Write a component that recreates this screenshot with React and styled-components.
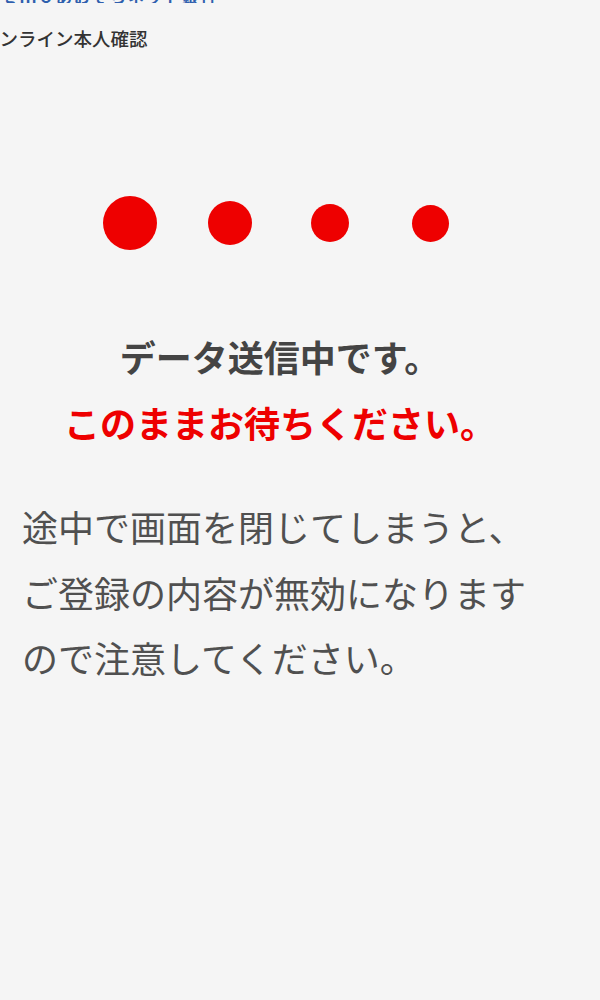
import React from "react";
import styled, { createGlobalStyle } from "styled-components";

const Global = createGlobalStyle`
  html, body { margin: 0; padding: 0; background: #f5f5f5; }
  body { font-family: "Noto Sans CJK JP", "Noto Sans", sans-serif; overflow: hidden; }
  #root { min-height: 1000px; background: #f5f5f5; }
`;

const TopStrip = styled.div`
  height: 3px;
  overflow: hidden;
  display: flex;
  align-items: flex-end;
  padding-left: 2px;
`;

const BrandText = styled.span`
  font-size: 16px;
  line-height: 14px;
  color: #2f5fae;
  font-weight: 700;
  white-space: nowrap;
  letter-spacing: 2px;
`;

const Title = styled.div`
  margin: 23px 0 0 -19px;
  font-size: 18.5px;
  line-height: 24px;
  font-weight: 500;
  color: #333;
  white-space: nowrap;
`;

const Main = styled.main`
  width: 560px;
  display: flex;
  flex-direction: column;
`;

const Dots = styled.div`
  margin-top: 146px;
  height: 54px;
  display: flex;
  justify-content: center;
  align-items: center;
`;

const Slot = styled.div`
  width: 100px;
  display: flex;
  justify-content: center;
  align-items: center;
`;

const Dot = styled.span`
  display: block;
  width: ${(p) => p.$size}px;
  height: ${(p) => p.$size}px;
  border-radius: 50%;
  background: #ee0000;
`;

const Heading = styled.h1`
  margin: ${(p) => (p.$red ? "0" : "73px 0 0")};
  font-size: 36px;
  line-height: 66px;
  font-weight: 700;
  text-align: center;
  color: ${(p) => (p.$red ? "#ee0000" : "#444444")};
  white-space: nowrap;
`;

const Note = styled.p`
  margin: 39px 0 0;
  padding-left: 22px;
  font-size: 36px;
  line-height: 65.5px;
  font-weight: 400;
  color: #505050;
  white-space: nowrap;
`;

export default function App() {
  const sizes = [54, 44, 38, 37];
  return (
    <>
      <Global />
      <TopStrip>
        <BrandText>ｇｍｏあおぞらネット銀行</BrandText>
      </TopStrip>
      <Title>オンライン本人確認</Title>
      <Main>
        <Dots>
          {sizes.map((s, i) => (
            <Slot key={i}>
              <Dot $size={s} />
            </Slot>
          ))}
        </Dots>
        <Heading>データ送信中です。</Heading>
        <Heading $red>このままお待ちください。</Heading>
        <Note>
          途中で画面を閉じてしまうと、
          <br />
          ご登録の内容が無効になります
          <br />
          ので注意してください。
        </Note>
      </Main>
    </>
  );
}
